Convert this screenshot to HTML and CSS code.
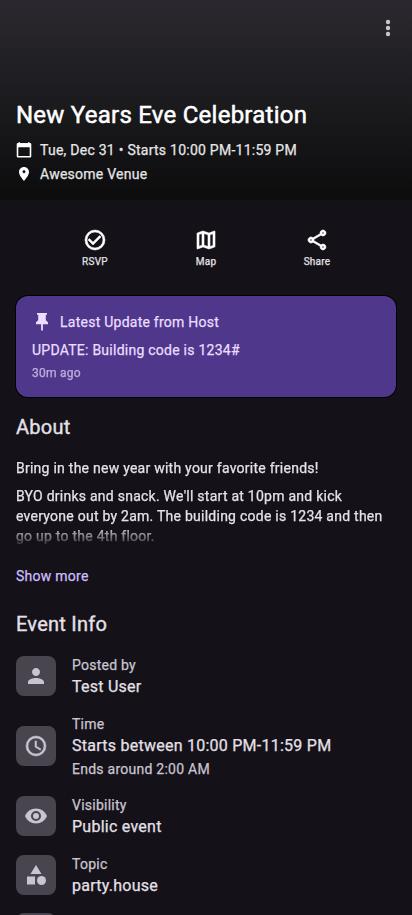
FILE: index.html
```
<!DOCTYPE html>
<html lang="en">
<head>
<meta charset="utf-8">
<meta name="viewport" content="width=device-width, initial-scale=1">
<title>New Years Eve Celebration</title>
<link rel="stylesheet" href="styles.css">
</head>
<body>
<main class="screen">
  <header class="hero">
    <button class="menu" aria-label="More options"><svg class="icon" viewBox="0 0 24 24"><circle cx="12" cy="6" r="2.200"/><circle cx="12" cy="12" r="2.200"/><circle cx="12" cy="18" r="2.200"/></svg></button>
    <h1 class="title">New Years Eve Celebration</h1>
    <div class="meta"><svg class="meta-icon" viewBox="0 0 16 16"><path d="M2.500 1V.2H4V1h8V.2h1.500V1h.5a1.300 1.300 0 0 1 1.300 1.300v11.900a1.300 1.300 0 0 1-1.300 1.300H2a1.300 1.300 0 0 1-1.300-1.300V2.300A1.300 1.300 0 0 1 2 1zM2.300 5.200V14h11.400V5.200z"/></svg><span>Tue, Dec 31 • Starts 10:00 PM-11:59 PM</span></div>
    <div class="meta"><svg class="meta-icon" viewBox="0 0 24 24"><path d="M12 1.500C7.900 1.500 4.500 4.900 4.500 9c0 5.250 7.500 13.500 7.500 13.500S19.500 14.250 19.500 9c0-4.100-3.400-7.500-7.500-7.500zm0 9.300a2.200 2.200 0 0 1 0-4.400 2.200 2.200 0 0 1 0 4.400z"/></svg><span>Awesome Venue</span></div>
  </header>

  <nav class="actions">
    <button class="action"><svg class="icon" viewBox="0 0 24 24"><path d="M12 2a10 10 0 1 0 0 20 10 10 0 0 0 0-20zm0 18a8 8 0 1 1 0-16 8 8 0 0 1 0 16z"/><path d="M16.590 7.580L10 14.170l-3.590-3.580L5 12l5 5 8-8z"/></svg><span>RSVP</span></button>
    <button class="action"><svg class="icon" viewBox="0 0 24 24"><path d="M20.500 3l-.160.030L15 5.100 9 3 3.360 4.900c-.210.070-.360.250-.360.480V20.500c0 .280.220.500.500.500l.160-.030L9 18.900l6 2.100 5.640-1.900c.210-.070.360-.250.360-.480V3.500c0-.280-.220-.500-.500-.500zM10 5.470l4 1.400v11.660l-4-1.400V5.470zm-5 .990l3-1.010v11.700l-3 1.160V6.460zm14 11.080l-3 1.010V6.860l3-1.160v11.840z"/></svg><span>Map</span></button>
    <button class="action"><svg class="icon" viewBox="0 0 24 24"><path d="M18 16.080c-.760 0-1.440.300-1.960.770L8.910 12.700c.050-.230.090-.460.090-.700s-.040-.470-.090-.700l7.050-4.110c.540.500 1.250.810 2.040.810 1.660 0 3-1.340 3-3s-1.340-3-3-3-3 1.340-3 3c0 .240.040.470.090.700L8.040 9.810C7.500 9.310 6.790 9 6 9c-1.660 0-3 1.340-3 3s1.340 3 3 3c.790 0 1.500-.310 2.040-.810l7.120 4.160c-.050.210-.080.430-.080.650 0 1.610 1.310 2.920 2.920 2.920s2.920-1.310 2.920-2.920-1.310-2.920-2.920-2.920zM18 4a1 1 0 1 1 0 2 1 1 0 0 1 0-2zM6 13a1 1 0 1 1 0-2 1 1 0 0 1 0 2zm12 7.020a1 1 0 1 1 0-2 1 1 0 0 1 0 2z"/></svg><span>Share</span></button>
  </nav>

  <section class="update">
    <div class="update-head"><svg class="pin" viewBox="0 0 20 20"><path d="M5 1h10v1.800h-1.200v5.400l2.200 2.100v1.900h-5.100v6.300H9.100v-6.300H4v-1.900l2.200-2.100V2.800H5z"/></svg><span>Latest Update from Host</span></div>
    <p class="update-text">UPDATE: Building code is 1234#</p>
    <p class="update-time">30m ago</p>
  </section>

  <section class="about">
    <h2 class="heading">About</h2>
    <div class="description">
      <p>Bring in the new year with your favorite friends!</p>
      <p>BYO drinks and snack. We'll start at 10pm and kick everyone out by 2am. The building code is 1234 and then go up to the 4th floor.</p>
    </div>
    <button class="more">Show more</button>
  </section>

  <section class="info">
    <h2 class="heading">Event Info</h2>
    <div class="row">
      <div class="tile"><svg class="icon" viewBox="0 0 24 24"><path d="M12 12c2.210 0 4-1.790 4-4s-1.790-4-4-4-4 1.790-4 4 1.790 4 4 4zm0 2c-2.670 0-8 1.340-8 4v2h16v-2c0-2.660-5.330-4-8-4z"/></svg></div>
      <div><p class="label">Posted by</p><p class="value">Test User</p></div>
    </div>
    <div class="row">
      <div class="tile"><svg class="icon bold" viewBox="0 0 24 24"><path d="M12 2a10 10 0 1 0 0 20 10 10 0 0 0 0-20zm0 18a8 8 0 1 1 0-16 8 8 0 0 1 0 16zm.500-13H11v6l5.250 3.150.750-1.230-4.500-2.670z"/></svg></div>
      <div><p class="label">Time</p><p class="value">Starts between 10:00 PM-11:59 PM</p><p class="label note">Ends around 2:00 AM</p></div>
    </div>
    <div class="row">
      <div class="tile"><svg class="icon" viewBox="0 0 24 24"><path d="M12 4.500C7 4.500 2.730 7.610 1 12c1.730 4.390 6 7.500 11 7.500s9.270-3.110 11-7.500c-1.730-4.390-6-7.500-11-7.500zM12 17a5 5 0 1 1 0-10 5 5 0 0 1 0 10zm0-8a3 3 0 1 0 0 6 3 3 0 0 0 0-6z"/></svg></div>
      <div><p class="label">Visibility</p><p class="value">Public event</p></div>
    </div>
    <div class="row">
      <div class="tile"><svg class="icon" viewBox="0 0 24 24"><path d="M12 2l-5.500 9h11zM3 13.500h8v8H3z"/><circle cx="17.500" cy="17.500" r="4.500"/></svg></div>
      <div><p class="label">Topic</p><p class="value">party.house</p></div>
    </div>
    <div class="row">
      <div class="tile"></div>
    </div>
  </section>
</main>
</body>
</html>
```
FILE: styles.css
```
* { box-sizing: border-box; margin: 0; padding: 0; }
body { background: #141218; }
.screen {
  height: 915px;
  overflow: hidden;
  font: 400 14px/20px Roboto, sans-serif;
  letter-spacing: .25px;
  color: #e6e0e9;
  -webkit-text-stroke: .25px currentColor;
}
button { background: none; border: 0; font: inherit; letter-spacing: inherit; color: inherit; }
svg { display: block; flex: none; fill: currentColor; }
.icon { width: 24px; height: 24px; }

.hero {
  height: 200px;
  padding: 16px 16px 0;
  display: flex;
  flex-direction: column;
  background: linear-gradient(#2b292f 0%, #0c0c0d 100%);
}
.menu { align-self: flex-end; margin-right: -4px; color: #cac4d0; height: 24px; }
.title { margin: 59px 0 7px; font-size: 24px; line-height: 32px; font-weight: 400; letter-spacing: .25px; color: #fff; -webkit-text-stroke-width: .5px; }
.meta { display: flex; align-items: center; gap: 8px; height: 24px; color: #e6e6e6; }
.meta-icon { width: 16px; height: 16px; color: #fff; }

.actions { display: flex; justify-content: center; height: 96px; padding-top: 28px; }
.action { width: 111px; height: 40px; display: flex; flex-direction: column; align-items: center; gap: 2px; font-size: 10px; line-height: 16px; color: #e6e0e9; }
.action .icon { color: #fff; stroke: currentColor; stroke-width: .6px; }
.bold { stroke: currentColor; stroke-width: .5px; }

.update { margin: 0 16px; height: 101px; padding: 16px 16px 0; border-radius: 12px; background: #4f378b; color: #eaddff; box-shadow: 0 0 0 1px #000; }
.update-head { display: flex; align-items: center; gap: 8px; height: 20px; }
.pin { width: 20px; height: 20px; }
.update-text { margin-top: 8px; }
.update-time { margin-top: 4px; font-size: 12px; line-height: 18px; opacity: .7; }

.about, .info { padding: 0 16px; }
.heading { font-size: 20px; line-height: 28px; font-weight: 400; letter-spacing: .25px; -webkit-text-stroke-width: .35px; }
.about .heading { padding-top: 16px; }
.description {
  margin-top: 17px;
  -webkit-mask-image: linear-gradient(#000 68px, transparent 90px);
  mask-image: linear-gradient(#000 68px, transparent 90px);
}
.description p + p { margin-top: 8px; }
.more { display: block; margin-top: 20px; height: 20px; color: #d0bcff; }

.info .heading { margin: 24px 0 16.500px; }
.row { display: flex; align-items: center; gap: 16px; margin-bottom: 16px; }
.tile { width: 40px; height: 40px; flex: none; display: flex; align-items: center; justify-content: center; border-radius: 8px; background: #49454f; color: #cac4d0; }
.row > div:last-child:not(.tile) { min-height: 43px; }
.label { color: #cac4d0; }
.value { font-size: 16px; line-height: 23px; }
.note { margin-top: 2px; }
```
